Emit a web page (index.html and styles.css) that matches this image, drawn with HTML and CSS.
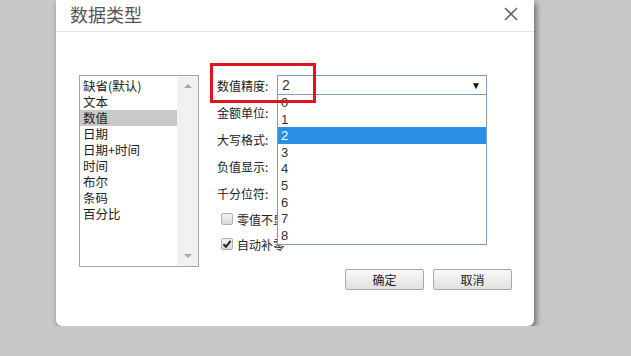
FILE: index.html
```html
<!DOCTYPE html>
<html lang="zh-CN">
  <head>
    <meta charset="UTF-8" />
    <title>数据类型</title>
    <link rel="stylesheet" href="styles.css">
  </head>
  <body>
    <div class="dialog">
      <div class="dialog-header">
        <h1 class="dialog-title">数据类型</h1>
        <button class="close-btn">
          <svg width="14" height="14" viewBox="0 0 14 14">
            <path d="M1 1 L13 13 M13 1 L1 13" stroke="#666" stroke-width="1.6" fill="none" />
          </svg>
        </button>
      </div>

      <div class="dialog-body">
        <div class="type-list">
          <ul class="type-items">
            <li>缺省(默认)</li>
            <li>文本</li>
            <li class="selected">数值</li>
            <li>日期</li>
            <li>日期+时间</li>
            <li>时间</li>
            <li>布尔</li>
            <li>条码</li>
            <li>百分比</li>
          </ul>
          <div class="scrollbar">
            <span class="arrow-up"></span>
            <span class="arrow-down"></span>
          </div>
        </div>

        <div class="form">
          <div class="form-row">
            <label>数值精度:</label>
            <div class="select-wrap">
              <div class="select">
                <span>2</span>
                <span class="caret">&#9660;</span>
              </div>
              <ul class="options">
                <li>0</li>
                <li>1</li>
                <li class="active">2</li>
                <li>3</li>
                <li>4</li>
                <li>5</li>
                <li>6</li>
                <li>7</li>
                <li>8</li>
              </ul>
            </div>
          </div>
          <div class="form-row"><label>金额单位:</label></div>
          <div class="form-row"><label>大写格式:</label></div>
          <div class="form-row"><label>负值显示:</label></div>
          <div class="form-row"><label>千分位符:</label></div>

          <div class="check-row first">
            <span class="check"></span>
            <span>零值不显示</span>
          </div>
          <div class="check-row">
            <span class="check checked">
              <svg width="10" height="10" viewBox="0 0 10 10">
                <path d="M1.5 5.2 L4 7.8 L8.6 1.8" stroke="#222" stroke-width="2" fill="none" />
              </svg>
            </span>
            <span>自动补零</span>
          </div>
        </div>
      </div>

      <div class="dialog-footer">
        <button class="btn">确定</button>
        <button class="btn">取消</button>
      </div>

      <div class="highlight-box"></div>
    </div>
  </body>
</html>
```

FILE: styles.css
```css
* {
  margin: 0;
  padding: 0;
  box-sizing: border-box;
}

body {
  background-color: #c8c8c8;
  font-family: "Noto Sans CJK SC", "Liberation Sans", sans-serif;
  font-size: 12px;
  color: #222;
}

.dialog {
  position: relative;
  margin-left: 56px;
  width: 478px;
  height: 326px;
  background-color: #fff;
  border-radius: 0 0 6px 6px;
  box-shadow: 2px 3px 6px rgba(0, 0, 0, 0.5);
}

.dialog-header {
  height: 32px;
  border-bottom: 1px solid #e4e4e4;
  display: flex;
  justify-content: space-between;
  align-items: center;
  padding: 0 16px 3px 14px;
}

.dialog-title {
  font-size: 18px;
  font-weight: normal;
  color: #555;
  line-height: 1;
}

.close-btn {
  border: none;
  background: none;
  display: flex;
}

.dialog-body {
  display: flex;
  padding: 43px 0 0 23px;
}

.type-list {
  width: 120px;
  height: 192px;
  border: 1px solid #a5a5a5;
  display: flex;
}

.type-items {
  list-style: none;
  flex: 1;
  padding-top: 2px;
  font-size: 12.5px;
}

.type-items li {
  height: 16px;
  line-height: 16px;
  padding-left: 3px;
}

.type-items .selected {
  background-color: #c9c9c9;
}

.scrollbar {
  width: 21px;
  background-color: #f1f1f1;
  display: flex;
  flex-direction: column;
  justify-content: space-between;
  align-items: center;
  padding: 8px 0 8px;
}

.arrow-up,
.arrow-down {
  width: 0;
  height: 0;
  border-left: 4px solid transparent;
  border-right: 4px solid transparent;
}

.arrow-up {
  border-bottom: 4px solid #a8a8a8;
}

.arrow-down {
  border-top: 4px solid #a8a8a8;
}

.form {
  margin-left: 18px;
  display: flex;
  flex-direction: column;
  gap: 7px;
}

.form-row {
  height: 20px;
  display: flex;
  align-items: center;
}

.form-row label {
  width: 60px;
}

.select-wrap {
  position: relative;
}

.select {
  position: relative;
  width: 210px;
  height: 20px;
  border: 1px solid #7f9db9;
  background-color: #fff;
  display: flex;
  justify-content: space-between;
  align-items: center;
  padding: 0 5px 0 4px;
  font-family: "Liberation Sans", sans-serif;
  font-size: 14px;
  color: #333;
  z-index: 3;
}

.caret {
  font-size: 10px;
  color: #111;
}

.options {
  position: absolute;
  top: 17px;
  left: 0;
  width: 210px;
  height: 153px;
  list-style: none;
  background-color: #fff;
  border: 1px solid #7f9db9;
  border-top: none;
  font-family: "Liberation Sans", sans-serif;
  font-size: 13px;
  color: #333;
  z-index: 2;
}

.options li {
  height: 16.6px;
  line-height: 17px;
  padding-left: 3px;
}

.options li:first-child {
  margin-top: 2px;
}

.options .active {
  background-color: #2b8fe8;
  color: #fff;
}

.check-row {
  height: 20px;
  display: flex;
  align-items: center;
  gap: 4px;
  padding-left: 4px;
  margin-top: -2px;
}

.check-row.first {
  margin-top: -1px;
}

.check {
  width: 12px;
  height: 12px;
  border: 1px solid #b0b0b0;
  border-radius: 2px;
  background: linear-gradient(#f4f4f4, #d8d8d8);
  display: flex;
  justify-content: center;
  align-items: center;
}

.dialog-footer {
  display: flex;
  justify-content: flex-end;
  gap: 9px;
  padding-right: 22px;
  margin-top: 2px;
}

.btn {
  width: 79px;
  height: 21px;
  border: 1px solid #a8a8a8;
  border-radius: 2px;
  background: linear-gradient(#fafafa, #e0e0e0);
  font-family: "Noto Sans CJK SC", sans-serif;
  font-size: 12px;
  color: #222;
}

.highlight-box {
  position: absolute;
  left: 154px;
  top: 63px;
  width: 106px;
  height: 40px;
  border: 3px solid #e0141e;
  z-index: 4;
}
```
